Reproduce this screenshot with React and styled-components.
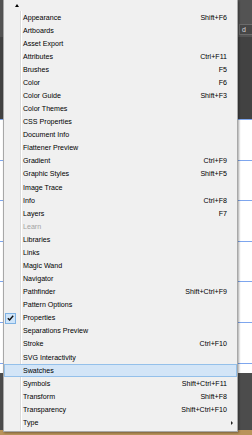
import styled, { createGlobalStyle, css } from 'styled-components';

const GlobalStyle = createGlobalStyle`
  html, body {
    margin: 0;
    padding: 0;
  }
  body {
    width: 252px;
    height: 435px;
    overflow: hidden;
    background: #535353;
    font-family: "Liberation Sans", Arial, sans-serif;
  }
`;

const Workspace = styled.div`
  position: relative;
  width: 252px;
  height: 435px;
  display: flex;
  flex-direction: column;
`;

const Band = styled.div`
  height: ${(p) => p.$h}px;
  flex: none;
  background: ${(p) => p.$bg};
  display: flex;
  justify-content: flex-end;
  align-items: center;
`;

const Field = styled.div`
  width: 13px;
  height: 11px;
  box-sizing: border-box;
  background: #474747;
  border: 1px solid #6b6b6b;
  border-right: none;
  color: #d8d8d8;
  font-size: 7px;
  line-height: 9px;
  padding-left: 2px;
`;

const Artboard = styled.div`
  height: 254px;
  flex: none;
  background: repeating-linear-gradient(
    to bottom,
    #7ea6ee 0,
    #7ea6ee 1px,
    #ffffff 1px,
    #ffffff 40.6px
  );
`;

const Menu = styled.div`
  position: absolute;
  top: 0;
  left: 3px;
  width: 235px;
  height: 432px;
  box-sizing: border-box;
  background: #f0f0f0;
  border: 1px solid #a8a8a8;
  border-top: none;
  box-shadow: 1px 1px 2px rgba(0, 0, 0, 0.35);
  color: #000;
`;

const ScrollUp = styled.div`
  height: 11px;
  display: flex;
  align-items: center;
  padding-left: 11px;
`;

const UpArrow = styled.span`
  width: 0;
  height: 0;
  border-left: 2.5px solid transparent;
  border-right: 2.5px solid transparent;
  border-bottom: 3px solid #000;
`;

const List = styled.ul`
  margin: 0;
  padding: 0;
  list-style: none;
  background: linear-gradient(
    to right,
    transparent 16px,
    #dadada 16px,
    #dadada 17px,
    #ffffff 17px,
    #ffffff 18px,
    transparent 18px
  );
`;

const Item = styled.li`
  height: 13.08px;
  display: grid;
  grid-template-columns: 16px 1fr auto 10px;
  align-items: center;
  font-size: 7.1px;
  white-space: nowrap;
  color: ${(p) => (p.$disabled ? '#a3a3a3' : '#000')};

  ${(p) =>
    p.$active &&
    css`
      background: #d3e5f7;
      box-shadow: inset 0 0 0 1px #94c0ea;
    `}
`;

const Gutter = styled.span`
  display: flex;
  align-items: center;
  padding-left: 1px;
`;

const CheckBox = styled.span`
  width: 11px;
  height: 11px;
  box-sizing: border-box;
  background: #cfe5fa;
  border: 1px solid #7fb2e3;
  display: flex;
  align-items: center;
  justify-content: center;
`;

const Label = styled.span`
  padding-left: 3px;
`;

const Shortcut = styled.span`
  text-align: right;
`;

const SubArrow = styled.span`
  justify-self: center;
  width: 0;
  height: 0;
  border-top: 2px solid transparent;
  border-bottom: 2px solid transparent;
  border-left: 2.5px solid #222;
`;

const items = [
  ['Appearance', 'Shift+F6'],
  ['Artboards'],
  ['Asset Export'],
  ['Attributes', 'Ctrl+F11'],
  ['Brushes', 'F5'],
  ['Color', 'F6'],
  ['Color Guide', 'Shift+F3'],
  ['Color Themes'],
  ['CSS Properties'],
  ['Document Info'],
  ['Flattener Preview'],
  ['Gradient', 'Ctrl+F9'],
  ['Graphic Styles', 'Shift+F5'],
  ['Image Trace'],
  ['Info', 'Ctrl+F8'],
  ['Layers', 'F7'],
  ['Learn', '', { disabled: true }],
  ['Libraries'],
  ['Links'],
  ['Magic Wand'],
  ['Navigator'],
  ['Pathfinder', 'Shift+Ctrl+F9'],
  ['Pattern Options'],
  ['Properties', '', { checked: true }],
  ['Separations Preview'],
  ['Stroke', 'Ctrl+F10'],
  ['SVG Interactivity'],
  ['Swatches', '', { active: true }],
  ['Symbols', 'Shift+Ctrl+F11'],
  ['Transform', 'Shift+F8'],
  ['Transparency', 'Shift+Ctrl+F10'],
  ['Type', '', { submenu: true }],
];

const Check = () => (
  <svg width="7" height="6" viewBox="0 0 7 6">
    <polyline
      points="0.8,3.2 2.6,5 6.2,0.8"
      fill="none"
      stroke="#111"
      strokeWidth="1.4"
    />
  </svg>
);

export default function App() {
  return (
    <>
      <GlobalStyle />
      <Workspace>
        <Band $h={21} $bg="#535353" />
        <Band $h={16} $bg="#535353">
          <Field>d</Field>
        </Band>
        <Band $h={82} $bg="#424242" />
        <Artboard />
        <Band $h={57} $bg="#4c4c4c" />
        <Band $h={5} $bg="#b9935a" />

        <Menu>
          <ScrollUp>
            <UpArrow />
          </ScrollUp>
          <List>
            {items.map(([label, shortcut, opts = {}]) => (
              <Item key={label} $disabled={opts.disabled} $active={opts.active}>
                <Gutter>
                  {opts.checked && (
                    <CheckBox>
                      <Check />
                    </CheckBox>
                  )}
                </Gutter>
                <Label>{label}</Label>
                <Shortcut>{shortcut}</Shortcut>
                {opts.submenu ? <SubArrow /> : <span />}
              </Item>
            ))}
          </List>
        </Menu>
      </Workspace>
    </>
  );
}
